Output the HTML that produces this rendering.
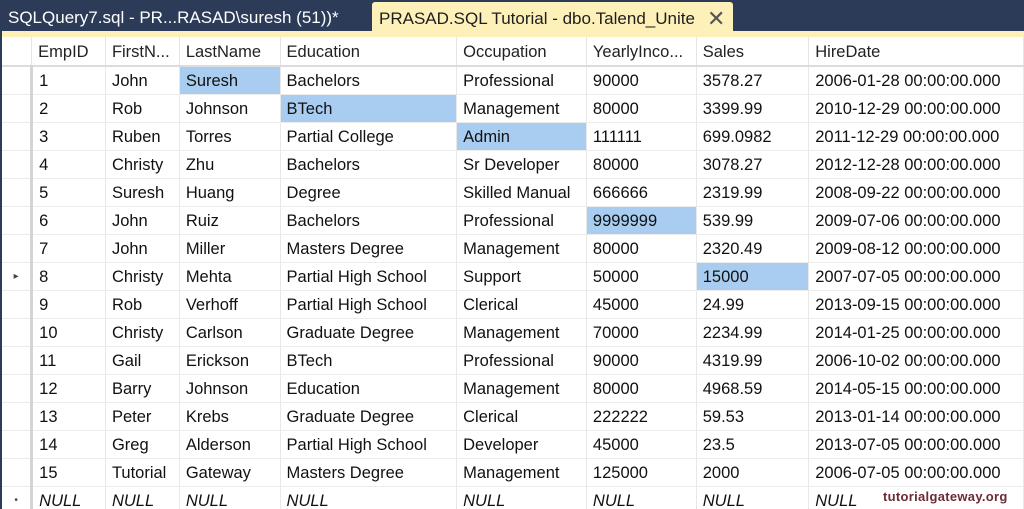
<!DOCTYPE html>
<html><head><style>
body{margin:0;width:1024px;height:509px;overflow:hidden;background:#2c3b58;font-family:"Liberation Sans",sans-serif;position:relative}
.tab1{position:absolute;left:8px;top:8px;color:#fff;font-size:17px}
.tab2{position:absolute;left:372px;top:2px;width:361px;height:32px;background:#fdf0b8;border-radius:3px 3px 0 0;font-size:17px;color:#1e1e1e}
.tab2 span{position:absolute;left:7px;top:7px}
.tab2 .x{position:absolute;left:335px;top:4px;font-size:22px;color:#555}
.strip{position:absolute;left:2px;top:31px;right:0;height:6px;background:#fdf0b8}
.grid{position:absolute;left:2px;top:37px;right:0;bottom:0;background:#fff;overflow:hidden}
table{border-collapse:collapse;table-layout:fixed;position:absolute;left:0;top:0;font-size:16.5px;color:#111}
td{border-right:1px solid #e8e8e8;border-bottom:1px solid #ececec;padding:2px 0 0 6px;box-sizing:border-box;white-space:nowrap;overflow:hidden}
tr td{height:28px}
tr.h td{height:29px;border-bottom:2px solid #dcdcdc;border-right:1px solid #e4e4e4;color:#222}
td.r{border-right:3px solid #d4d4d4;padding:0;font-size:10px;color:#444;text-align:center}
td.s{background:#a9cdf0}
tr.n td{font-style:italic}
.wm{position:absolute;left:883px;top:489px;font-size:13px;font-weight:bold;color:#6b2a35;letter-spacing:0.3px}
</style></head><body>
<div class="tab1">SQLQuery7.sql - PR...RASAD\suresh (51))*</div>
<div class="tab2"><span>PRASAD.SQL Tutorial - dbo.Talend_Unite</span><span class="x">✕</span></div>
<div class="strip"></div>
<div class="grid">
<table>
<colgroup><col style="width:30px"><col style="width:74px"><col style="width:74px"><col style="width:101px"><col style="width:177px"><col style="width:130px"><col style="width:110px"><col style="width:113px"><col style="width:215px"></colgroup>
<tr class="h"><td class="r"></td><td>EmpID</td><td>FirstN...</td><td>LastName</td><td>Education</td><td>Occupation</td><td>YearlyInco...</td><td>Sales</td><td>HireDate</td></tr>
<tr><td class="r"></td><td>1</td><td>John</td><td class="s">Suresh</td><td>Bachelors</td><td>Professional</td><td>90000</td><td>3578.27</td><td>2006-01-28 00:00:00.000</td></tr>
<tr><td class="r"></td><td>2</td><td>Rob</td><td>Johnson</td><td class="s">BTech</td><td>Management</td><td>80000</td><td>3399.99</td><td>2010-12-29 00:00:00.000</td></tr>
<tr><td class="r"></td><td>3</td><td>Ruben</td><td>Torres</td><td>Partial College</td><td class="s">Admin</td><td>111111</td><td>699.0982</td><td>2011-12-29 00:00:00.000</td></tr>
<tr><td class="r"></td><td>4</td><td>Christy</td><td>Zhu</td><td>Bachelors</td><td>Sr Developer</td><td>80000</td><td>3078.27</td><td>2012-12-28 00:00:00.000</td></tr>
<tr><td class="r"></td><td>5</td><td>Suresh</td><td>Huang</td><td>Degree</td><td>Skilled Manual</td><td>666666</td><td>2319.99</td><td>2008-09-22 00:00:00.000</td></tr>
<tr><td class="r"></td><td>6</td><td>John</td><td>Ruiz</td><td>Bachelors</td><td>Professional</td><td class="s">9999999</td><td>539.99</td><td>2009-07-06 00:00:00.000</td></tr>
<tr><td class="r"></td><td>7</td><td>John</td><td>Miller</td><td>Masters Degree</td><td>Management</td><td>80000</td><td>2320.49</td><td>2009-08-12 00:00:00.000</td></tr>
<tr><td class="r">▸</td><td>8</td><td>Christy</td><td>Mehta</td><td>Partial High School</td><td>Support</td><td>50000</td><td class="s">15000</td><td>2007-07-05 00:00:00.000</td></tr>
<tr><td class="r"></td><td>9</td><td>Rob</td><td>Verhoff</td><td>Partial High School</td><td>Clerical</td><td>45000</td><td>24.99</td><td>2013-09-15 00:00:00.000</td></tr>
<tr><td class="r"></td><td>10</td><td>Christy</td><td>Carlson</td><td>Graduate Degree</td><td>Management</td><td>70000</td><td>2234.99</td><td>2014-01-25 00:00:00.000</td></tr>
<tr><td class="r"></td><td>11</td><td>Gail</td><td>Erickson</td><td>BTech</td><td>Professional</td><td>90000</td><td>4319.99</td><td>2006-10-02 00:00:00.000</td></tr>
<tr><td class="r"></td><td>12</td><td>Barry</td><td>Johnson</td><td>Education</td><td>Management</td><td>80000</td><td>4968.59</td><td>2014-05-15 00:00:00.000</td></tr>
<tr><td class="r"></td><td>13</td><td>Peter</td><td>Krebs</td><td>Graduate Degree</td><td>Clerical</td><td>222222</td><td>59.53</td><td>2013-01-14 00:00:00.000</td></tr>
<tr><td class="r"></td><td>14</td><td>Greg</td><td>Alderson</td><td>Partial High School</td><td>Developer</td><td>45000</td><td>23.5</td><td>2013-07-05 00:00:00.000</td></tr>
<tr><td class="r"></td><td>15</td><td>Tutorial</td><td>Gateway</td><td>Masters Degree</td><td>Management</td><td>125000</td><td>2000</td><td>2006-07-05 00:00:00.000</td></tr>
<tr class="n"><td class="r" style="font-style:normal">•</td><td>NULL</td><td>NULL</td><td>NULL</td><td>NULL</td><td>NULL</td><td>NULL</td><td>NULL</td><td>NULL</td></tr>
</table>
</div>
<div class="wm">tutorialgateway.org</div>
</body></html>
